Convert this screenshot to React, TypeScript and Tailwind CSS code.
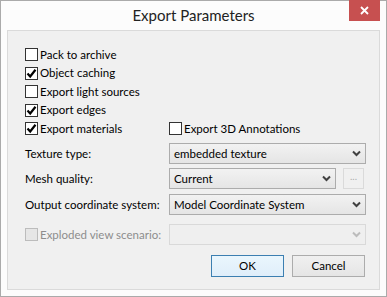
import React from 'react';

const font = { fontFamily: 'Lato, "Open Sans", sans-serif' };

function Check({ checked, disabled }: { checked?: boolean; disabled?: boolean }) {
  return (
    <span
      className={`flex h-[13px] w-[13px] shrink-0 items-center justify-center border ${
        disabled ? 'border-[#bcbcbc] bg-[#e6e6e6]' : 'border-[#333] bg-white'
      }`}
    >
      {checked && (
        <svg width="11" height="11" viewBox="0 0 11 11">
          <path d="M1.5 5.5 L4.2 8.5 L9.5 1.8" fill="none" stroke="#000" strokeWidth="2.2" />
        </svg>
      )}
    </span>
  );
}

function CheckRow({ label, checked }: { label: string; checked?: boolean }) {
  return (
    <div className="flex h-[13px] items-center gap-[2px]">
      <Check checked={checked} />
      <span className="whitespace-nowrap text-[11.5px] leading-none text-black">{label}</span>
    </div>
  );
}

function Chevron({ color = '#404040' }: { color?: string }) {
  return (
    <svg width="9" height="7" viewBox="0 0 9 7">
      <path d="M1 1.5 L4.5 5 L8 1.5" fill="none" stroke={color} strokeWidth="2" />
    </svg>
  );
}

function Select({ value, width, disabled }: { value?: string; width: string; disabled?: boolean }) {
  return (
    <div
      className={`flex h-[21px] items-center justify-between border pl-[4px] pr-[4px] ${width} ${
        disabled
          ? 'border-[#d9d9d9] bg-[#efefef]'
          : 'border-[#acacac] bg-gradient-to-b from-[#f2f2f2] to-[#e5e5e5]'
      }`}
    >
      <span className="whitespace-nowrap text-[11.5px] leading-none text-black">{value}</span>
      <Chevron color={disabled ? '#bcbcbc' : '#404040'} />
    </div>
  );
}

export default function App() {
  return (
    <div className="flex h-[297px] w-[387px] flex-col border border-[#aaaaaa] bg-[#fcfcfc]" style={font}>
      <div className="relative flex h-[29px] shrink-0 items-center justify-center">
        <span className="text-[15px] text-[#222]">Export Parameters</span>
        <div className="absolute right-[6px] top-[-1px] flex h-[21px] w-[31px] items-center justify-center bg-[#c75050]">
          <svg width="9" height="9" viewBox="0 0 9 9">
            <path d="M1 1 L8 8 M8 1 L1 8" stroke="#fff" strokeWidth="1.8" />
          </svg>
        </div>
      </div>
      <div className="mx-[6px] mb-[6px] flex flex-1 flex-col border border-[#dadada] bg-[#f0f0f0] pl-[17px] pr-[13px] pt-[17px]">
        <div className="flex flex-col gap-[5.5px]">
          <CheckRow label="Pack to archive" />
          <CheckRow label="Object caching" checked />
          <CheckRow label="Export light sources" />
          <CheckRow label="Export edges" checked />
          <div className="flex">
            <div className="w-[144px]">
              <CheckRow label="Export materials" checked />
            </div>
            <CheckRow label="Export 3D Annotations" />
          </div>
        </div>
        <div className="mt-[8px] flex items-center">
          <span className="w-[144px] whitespace-nowrap text-[11.5px] text-black">Texture type:</span>
          <Select value="embedded texture" width="w-[197px]" />
        </div>
        <div className="mt-[4px] flex items-center">
          <span className="w-[144px] whitespace-nowrap text-[11.5px] text-black">Mesh quality:</span>
          <Select value="Current" width="w-[167px]" />
          <div className="ml-[7px] flex h-[21px] w-[21px] items-center justify-center border border-[#dadada] bg-[#f0f0f0] pb-[4px] text-[10px] text-[#adadad]">
            ...
          </div>
        </div>
        <div className="mt-[5px] flex items-center">
          <span className="w-[144px] whitespace-nowrap text-[11.5px] text-black">Output coordinate system:</span>
          <Select value="Model Coordinate System" width="w-[197px]" />
        </div>
        <div className="mt-[9px] flex items-center">
          <div className="flex w-[144px] items-center gap-[2px]">
            <Check disabled />
            <span className="whitespace-nowrap text-[11.5px] text-[#8d8d8d]">Exploded view scenario:</span>
          </div>
          <Select width="w-[197px]" disabled />
        </div>
        <div className="mt-[10px] flex justify-end gap-[8px] pr-[1px]">
          <div className="flex h-[22px] w-[73px] items-center justify-center border border-[#3c7fb1] bg-gradient-to-b from-[#eaf6fd] to-[#e0eefa] text-[11.5px] text-black">
            OK
          </div>
          <div className="flex h-[22px] w-[73px] items-center justify-center border border-[#acacac] bg-gradient-to-b from-[#f0f0f0] to-[#e5e5e5] text-[11.5px] text-black">
            Cancel
          </div>
        </div>
      </div>
    </div>
  );
}
